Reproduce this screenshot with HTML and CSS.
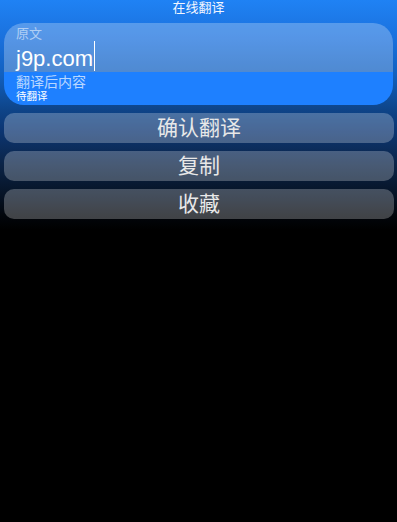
FILE: index.html
```html
<!DOCTYPE html>
<html lang="zh-CN">
<head>
    <meta charset="UTF-8">
    <meta name="viewport" content="width=device-width, initial-scale=1.0">
    <title>在线翻译</title>
    <link rel="stylesheet" href="styles.css">
</head>
<body>
    <div class="title">在线翻译</div>

    <!-- Input / output card -->
    <div class="card">
        <div class="source">
            <div class="source-label">原文</div>
            <div class="source-input">j9p.com<span class="caret"></span></div>
        </div>
        <div class="result">
            <div class="result-label">翻译后内容</div>
            <div class="result-text">待翻译</div>
        </div>
    </div>

    <!-- Actions -->
    <div class="actions">
        <button class="action-btn">确认翻译</button>
        <button class="action-btn">复制</button>
        <button class="action-btn">收藏</button>
    </div>
</body>
</html>
```

FILE: styles.css
```css
body {
    margin: 0;
    width: 397px;
    height: 522px;
    font-family: "Liberation Sans", "Noto Sans CJK SC", sans-serif;
    color: #fff;
    background: linear-gradient(to bottom, #1f82f4 0, #1a70dc 40px, #1260bf 75px, #0e4488 110px, #0c3673 130px, #0b2345 166px, #051020 200px, #02060c 215px, #000 230px);
}
.title {
    height: 17px;
    line-height: 16px;
    font-size: 13px;
    text-align: center;
    color: #f2f6ff;
}

.card {
    margin: 6px 4px 0 4px;
    border-radius: 20px;
    overflow: hidden;
}
.source {
    height: 49px;
    padding: 0 12px;
    background: rgba(255, 255, 255, 0.26);
    box-sizing: border-box;
}
.source-label {
    padding-top: 3px;
    font-size: 13px;
    line-height: 15px;
    color: rgba(255, 255, 255, 0.55);
}
.source-input {
    display: flex;
    align-items: flex-end;
    height: 31px;
    font-size: 22px;
    line-height: 26px;
    color: #fff;
}
.source-input .caret {
    display: inline-block;
    width: 1px;
    height: 30px;
    margin-left: 1px;
    background: #fff;
    align-self: stretch;
}
.result {
    height: 33px;
    padding: 0 12px;
    background: #1e80ff;
    box-sizing: border-box;
}
.result-label {
    padding-top: 2px;
    font-size: 14px;
    line-height: 16px;
    color: rgba(255, 255, 255, 0.7);
}
.result-text {
    font-size: 10.5px;
    line-height: 13px;
    color: #fff;
}

.actions {
    display: flex;
    flex-direction: column;
    gap: 8px;
    margin: 8px 3px 0 4px;
}
.action-btn {
    height: 30px;
    padding: 0;
    border: none;
    border-radius: 10px;
    background: rgba(255, 255, 255, 0.25);
    color: #e8e8e8;
    font-family: "Liberation Sans", "Noto Sans CJK SC", sans-serif;
    font-size: 21px;
    line-height: 30px;
}
```
